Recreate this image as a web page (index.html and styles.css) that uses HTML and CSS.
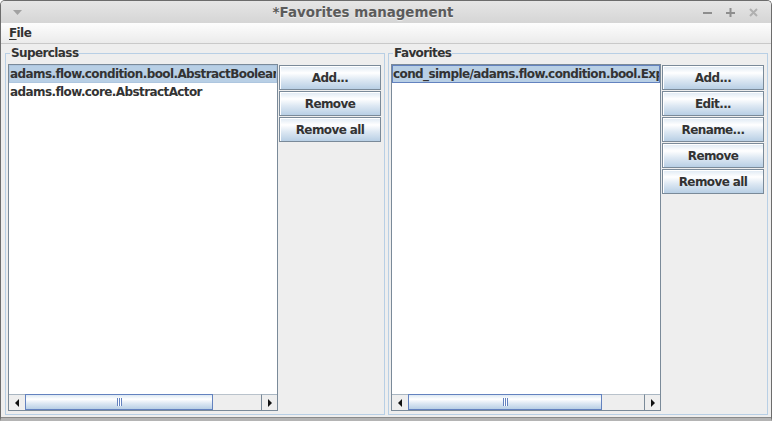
FILE: index.html
```html
<!DOCTYPE html>
<html>
<head>
<meta charset="utf-8">
<link rel="stylesheet" href="styles.css">
</head>
<body>
<div class="window">
  <div class="titlebar">
    <div class="tb-left">
      <svg width="9" height="6" viewBox="0 0 9 6"><polygon points="0,0 9,0 4.5,5" fill="#a2a2a2"/></svg>
    </div>
    <div class="tb-title">*Favorites management</div>
    <div class="tb-controls">
      <svg width="10" height="10" viewBox="0 0 10 10"><rect x="0" y="4" width="9" height="2" fill="#8e8e8e"/></svg>
      <svg width="10" height="10" viewBox="0 0 10 10"><rect x="0" y="4" width="9" height="2" fill="#8e8e8e"/><rect x="3.5" y="0" width="2" height="9" fill="#8e8e8e"/></svg>
      <svg width="10" height="10" viewBox="0 0 10 10"><path d="M1 1 L8 8 M8 1 L1 8" stroke="#b0b0b0" stroke-width="2"/></svg>
    </div>
  </div>
  <div class="menubar"><span class="menu"><span class="mn">F</span>ile</span></div>
  <div class="content">
    <fieldset class="group">
      <legend>Superclass</legend>
      <div class="group-body">
        <div class="list">
          <div class="items">
            <div class="item selected">adams.flow.condition.bool.AbstractBooleanCondition</div>
            <div class="item">adams.flow.core.AbstractActor</div>
          </div>
          <div class="hscroll">
            <div class="arrow">
              <svg width="4" height="8" viewBox="0 0 4 8"><polygon points="4,0 4,8 0,4" fill="#111"/></svg>
            </div>
            <div class="thumb thumb-left"><span class="grip"></span></div>
            <div class="track"></div>
            <div class="arrow arrow-right">
              <svg width="4" height="8" viewBox="0 0 4 8"><polygon points="0,0 0,8 4,4" fill="#111"/></svg>
            </div>
          </div>
        </div>
        <div class="buttons">
          <button class="btn">Add...</button>
          <button class="btn">Remove</button>
          <button class="btn">Remove all</button>
        </div>
      </div>
    </fieldset>
    <fieldset class="group">
      <legend>Favorites</legend>
      <div class="group-body">
        <div class="list">
          <div class="items">
            <div class="item selected focused">cond_simple/adams.flow.condition.bool.Expression</div>
          </div>
          <div class="hscroll">
            <div class="arrow">
              <svg width="4" height="8" viewBox="0 0 4 8"><polygon points="4,0 4,8 0,4" fill="#111"/></svg>
            </div>
            <div class="thumb thumb-right"><span class="grip"></span></div>
            <div class="track"></div>
            <div class="arrow arrow-right">
              <svg width="4" height="8" viewBox="0 0 4 8"><polygon points="0,0 0,8 4,4" fill="#111"/></svg>
            </div>
          </div>
        </div>
        <div class="buttons">
          <button class="btn">Add...</button>
          <button class="btn">Edit...</button>
          <button class="btn">Rename...</button>
          <button class="btn">Remove</button>
          <button class="btn">Remove all</button>
        </div>
      </div>
    </fieldset>
  </div>
</div>
</body>
</html>
```

FILE: styles.css
```css
* { box-sizing: border-box; }
html, body {
  margin: 0;
  padding: 0;
  background: #ffffff;
}
body {
  width: 772px;
  height: 421px;
  overflow: hidden;
  font-family: "DejaVu Sans", "Liberation Sans", sans-serif;
  font-size: 12px;
  font-weight: bold;
  letter-spacing: -0.6px;
  color: #333333;
}
.window {
  width: 772px;
  height: 421px;
  display: flex;
  flex-direction: column;
  border: 1px solid #6c6c6c;
  border-bottom: 3px solid #b4b4b4;
  border-radius: 5px 5px 0 0;
  overflow: hidden;
  background: #eeeeee;
}
.titlebar {
  height: 22px;
  flex: none;
  display: flex;
  align-items: center;
  background: linear-gradient(#e6e6e6, #d5d5d5);
}
.tb-left {
  width: 24px;
  padding-left: 12px;
  display: flex;
  align-items: center;
  padding-top: 2px;
}
.tb-title {
  flex: 1;
  text-align: center;
  font-size: 13.4px;
  letter-spacing: 0;
  color: #5b5b5b;
  text-shadow: 0 1px 0 rgba(255,255,255,0.5);
  line-height: 22px;
  padding-top: 1px;
}
.tb-controls {
  width: 70px;
  display: flex;
  align-items: center;
  gap: 13px;
  padding-left: 2px;
  padding-top: 2px;
}
.menubar {
  height: 21px;
  flex: none;
  background: linear-gradient(#fdfdfd, #ebebeb);
  border-bottom: 1px solid #c9c9c9;
  padding-left: 8px;
  line-height: 20px;
}
.menu { color: #333333; }
.mn { text-decoration: underline; text-underline-offset: 2px; }
.content {
  flex: 1;
  display: flex;
  gap: 3px;
  padding: 0 3px 2px 4px;
  border-bottom: 1px solid #8a8a8a;
}
.group {
  flex: 1;
  min-width: 0;
  margin: 0;
  padding: 2px 3px 3px 2px;
  border: 1px solid #b8cfe5;
  display: flex;
  flex-direction: column;
}
.group legend {
  margin-left: 2px;
  padding: 0 1px;
  line-height: 18px;
  height: 18px;
  color: #333333;
}
.group-body {
  flex: 1;
  display: flex;
  gap: 1px;
  min-height: 0;
}
.list {
  width: 270px;
  flex: none;
  border: 1px solid #7a8a99;
  background: #ffffff;
  display: flex;
  flex-direction: column;
}
.items {
  flex: 1;
  overflow: hidden;
}
.item {
  height: 18px;
  line-height: 16px;
  border: 1px solid transparent;
  white-space: nowrap;
  overflow: hidden;
  color: #333333;
}
.item.selected {
  background: #b8cfe5;
  border-color: #aec6df;
}
.item.focused {
  border-color: #6382bf;
}
.hscroll {
  height: 16px;
  flex: none;
  display: flex;
  background: #eeeeee;
}
.arrow {
  width: 16px;
  flex: none;
  display: flex;
  align-items: center;
  justify-content: center;
  border-top: 1px solid #a9b6c2;
  background: #eeeeee;
  padding-top: 1px;
}
.arrow-right {
  border-left: 1px solid #7a8a99;
}
.thumb {
  flex: none;
  border: 1px solid #6382bf;
  background: linear-gradient(#dde8f3 0%, #ffffff 30%, #dde8f3 60%, #b8cfe5 100%);
  display: flex;
  align-items: center;
  justify-content: center;
}
.thumb-left { width: 188px; }
.thumb-right { width: 194px; }
.grip {
  width: 5px;
  height: 8px;
  background: repeating-linear-gradient(90deg, #6382bf 0 1px, #ffffff 1px 2px);
}
.track {
  flex: 1;
  border-top: 1px solid #b9c2cb;
  background: #eeeeee;
}
.buttons {
  width: 102px;
  flex: none;
  display: flex;
  flex-direction: column;
  gap: 1px;
  margin-top: 1px;
}
.btn {
  height: 25px;
  width: 102px;
  margin: 0;
  padding: 0;
  font: inherit;
  letter-spacing: -0.6px;
  color: #333333;
  border: 1px solid #7a8a99;
  box-shadow: inset 1px 1px 0 #ffffff;
  background: linear-gradient(#dde8f3 0%, #ffffff 30%, #dde8f3 60%, #b8cfe5 100%);
}
```
